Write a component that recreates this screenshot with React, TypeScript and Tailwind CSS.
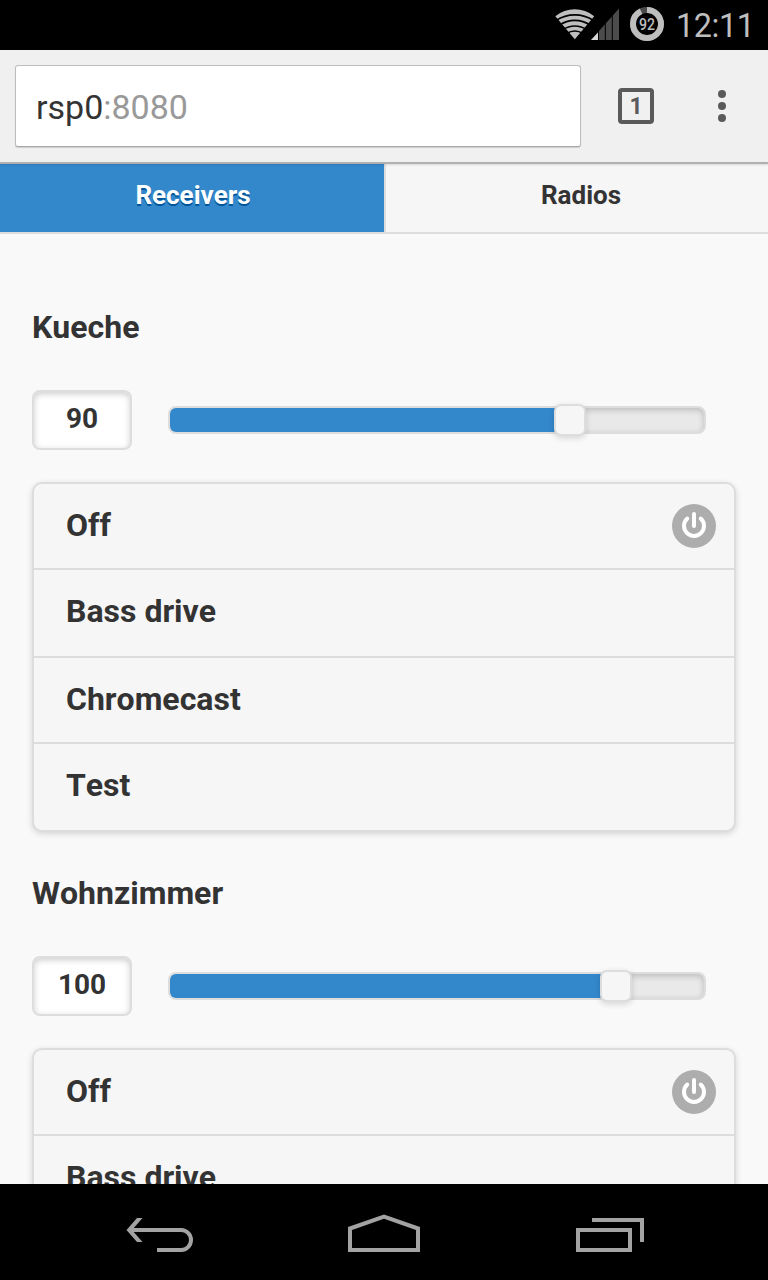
import React from "react";

function StatusBar() {
  return (
    <div className="flex h-[50px] shrink-0 items-start bg-black">
      <svg className="h-[50px] w-[228px] ml-[540px]" viewBox="540 0 228 50">
        <path d="M574.8 39.200 L555.300 16.200 Q564 9.300 574.800 9.300 Q585.500 9.300 594.200 16.200 Z" fill="#bebebe" />
        <g fill="none" stroke="#000" strokeWidth="1.6">
          <path d="M556 20.500A34 34 0 0 1 593.600 20.500" />
          <path d="M559.300 25.300A27 27 0 0 1 590.300 25.300" />
          <path d="M562.800 29.800A21 21 0 0 1 586.800 29.800" />
          <path d="M566.800 33.500A14 14 0 0 1 582.800 33.500" />
        </g>
        <path d="M591 40 L619 8.500 V40 Z" fill="#4b4b4b" />
        <path d="M591 40 L598 32.500 V40 Z" fill="#d8d8d8" />
        <path d="M605.300 15V40 M612.300 10V40 M598.500 25V40" stroke="#000" strokeWidth="1" />
        <circle cx="647" cy="24" r="14" fill="none" stroke="#4b4b4b" strokeWidth="6" />
        <circle cx="647" cy="24" r="14" fill="none" stroke="#bebebe" strokeWidth="6" pathLength="100" strokeDasharray="93 7" transform="rotate(-90 647 24)" />
        <text x="647" y="30" textAnchor="middle" textLength="16" lengthAdjust="spacingAndGlyphs" fill="#bebebe" fontFamily="Roboto, sans-serif" fontSize="17" fontWeight="500">92</text>
        <text x="676" y="37" textLength="79" fill="#bebebe" fontFamily="Roboto, sans-serif" fontSize="32.300">12:11</text>
      </svg>
    </div>
  );
}

function BrowserBar() {
  return (
    <div className="relative z-10 flex h-[114px] shrink-0 items-start border-b-2 border-[#b0b0b0] bg-[#f0f0f0] pt-[15px] pl-[15px] shadow-[0_1px_2px_rgba(0,0,0,0.12)]">
      <div className="flex h-[82px] w-[566px] items-center rounded-[3px] border border-[#bdbdbd] border-b-[#a8a8a8] bg-white pl-5 pt-[3px] text-[34px] text-[#333] shadow-[0_1px_1px_rgba(0,0,0,0.15)]">
        <span>rsp0</span>
        <span className="text-[#999]">:8080</span>
      </div>
      <div className="mt-[23px] ml-[37px] flex h-9 w-9 items-center justify-center rounded-[4px] border-4 border-[#5a5a5a] text-[23px] font-bold leading-none text-[#5a5a5a]">
        1
      </div>
      <div className="mt-[25px] ml-16 flex flex-col gap-1">
        <i className="h-2 w-2 rounded-full bg-[#5a5a5a]" />
        <i className="h-2 w-2 rounded-full bg-[#5a5a5a]" />
        <i className="h-2 w-2 rounded-full bg-[#5a5a5a]" />
      </div>
    </div>
  );
}

function Tabs() {
  return (
    <div className="flex h-[70px] shrink-0 border-b-2 border-[#ddd] text-[26px] font-bold leading-[62px]">
      <div className="w-[384px] bg-[#38c] text-center text-white [text-shadow:0_2px_0_#005599]">
        <span className="pl-0.5">Receivers</span>
      </div>
      <div className="flex-1 border-l-2 border-[#ddd] bg-[#f6f6f6] pl-2 text-center text-[#333] [text-shadow:0_2px_0_#f3f3f3]">
        Radios
      </div>
    </div>
  );
}

function PowerIcon() {
  return (
    <svg className="h-11 w-11" viewBox="0 0 44 44" fill="none" stroke="#fff" strokeWidth="4" strokeLinecap="round">
      <circle cx="22" cy="22" r="22" fill="#adadad" stroke="none" />
      <path d="M22 10V22" />
      <path d="M15.300 14.500A10 10 0 1 0 28.700 14.500" />
    </svg>
  );
}

function Volume({ value, position }: { value: number; position: number }) {
  return (
    <div className="flex h-[60px] items-start">
      <div className="h-[60px] w-[100px] rounded-[8px] border-2 border-[#ddd] bg-white text-center text-[28px] font-bold leading-[53px] text-[#333] shadow-[inset_0_2px_6px_rgba(0,0,0,0.2)]">
        {value}
      </div>
      <div className="relative mt-4 ml-9 h-7 w-[538px] rounded-[8px] border-2 border-[#ddd] bg-[#e9e9e9] shadow-[inset_0_2px_6px_rgba(0,0,0,0.2)]">
        <div className="h-6 rounded-l-[6px] bg-[#38c]" style={{ width: position + 4 }} />
        <div
          className="absolute -top-1 h-8 w-8 rounded-[7px] border-2 border-[#ddd] bg-[#f6f6f6] shadow-[0_2px_6px_rgba(0,0,0,0.15)]"
          style={{ left: position }}
        />
      </div>
    </div>
  );
}

type ZoneProps = { name: string; value: number; position: number; children: React.ReactNode };

function Zone({ name, value, position, children }: ZoneProps) {
  return (
    <section className="h-[566px] shrink-0 px-8">
      <h2 className="h-[92px] pt-2 text-[32px] font-bold leading-[42px] text-[#333]">{name}</h2>
      <Volume value={value} position={position} />
      <ul className="mt-8 h-[350px] overflow-hidden rounded-[10px] border-2 border-[#ddd] bg-[#f6f6f6] text-[32px] font-bold text-[#333] shadow-[0_2px_6px_rgba(0,0,0,0.15)]">
        <li className="flex h-[86px] items-center justify-between border-b-2 border-[#ddd] pr-[18px] pl-8">
          <span className="pb-0.5">Off</span>
          <PowerIcon />
        </li>
        <li className="flex h-[88px] items-center border-b-2 border-[#ddd] pb-1 pl-8">Bass drive</li>
        {children}
      </ul>
    </section>
  );
}

function NavBar() {
  return (
    <div className="h-24 shrink-0 bg-black">
      <svg className="h-24 w-full" viewBox="0 1184 768 96" fill="none" stroke="#a3a3a3" strokeWidth="4">
        <path d="M130 1230H181A10 10 0 0 1 181 1250H157" />
        <path d="M137 1218H142.500L132 1230L142.500 1242H137L126.500 1230Z" fill="#a3a3a3" stroke="none" />
        <path d="M350 1250V1228.500L384 1216.500L418 1228.500V1250Z" />
        <path d="M578 1230H630V1250H578Z" />
        <path d="M592 1220H642V1242" />
      </svg>
    </div>
  );
}

export default function App() {
  return (
    <div className="flex h-[1280px] w-[768px] flex-col overflow-hidden bg-[#f9f9f9] font-[Roboto,sans-serif] [font-kerning:none]">
      <StatusBar />
      <BrowserBar />
      <Tabs />
      <main className="flex min-h-0 flex-1 flex-col overflow-hidden pt-16">
        <Zone name="Kueche" value={90} position={384}>
          <li className="flex h-[86px] items-center border-b-2 border-[#ddd] pb-0.5 pl-8">Chromecast</li>
          <li className="flex h-[86px] items-center pb-1 pl-8">Test</li>
        </Zone>
        <Zone name="Wohnzimmer" value={100} position={430}>
          {null}
        </Zone>
      </main>
      <NavBar />
    </div>
  );
}
